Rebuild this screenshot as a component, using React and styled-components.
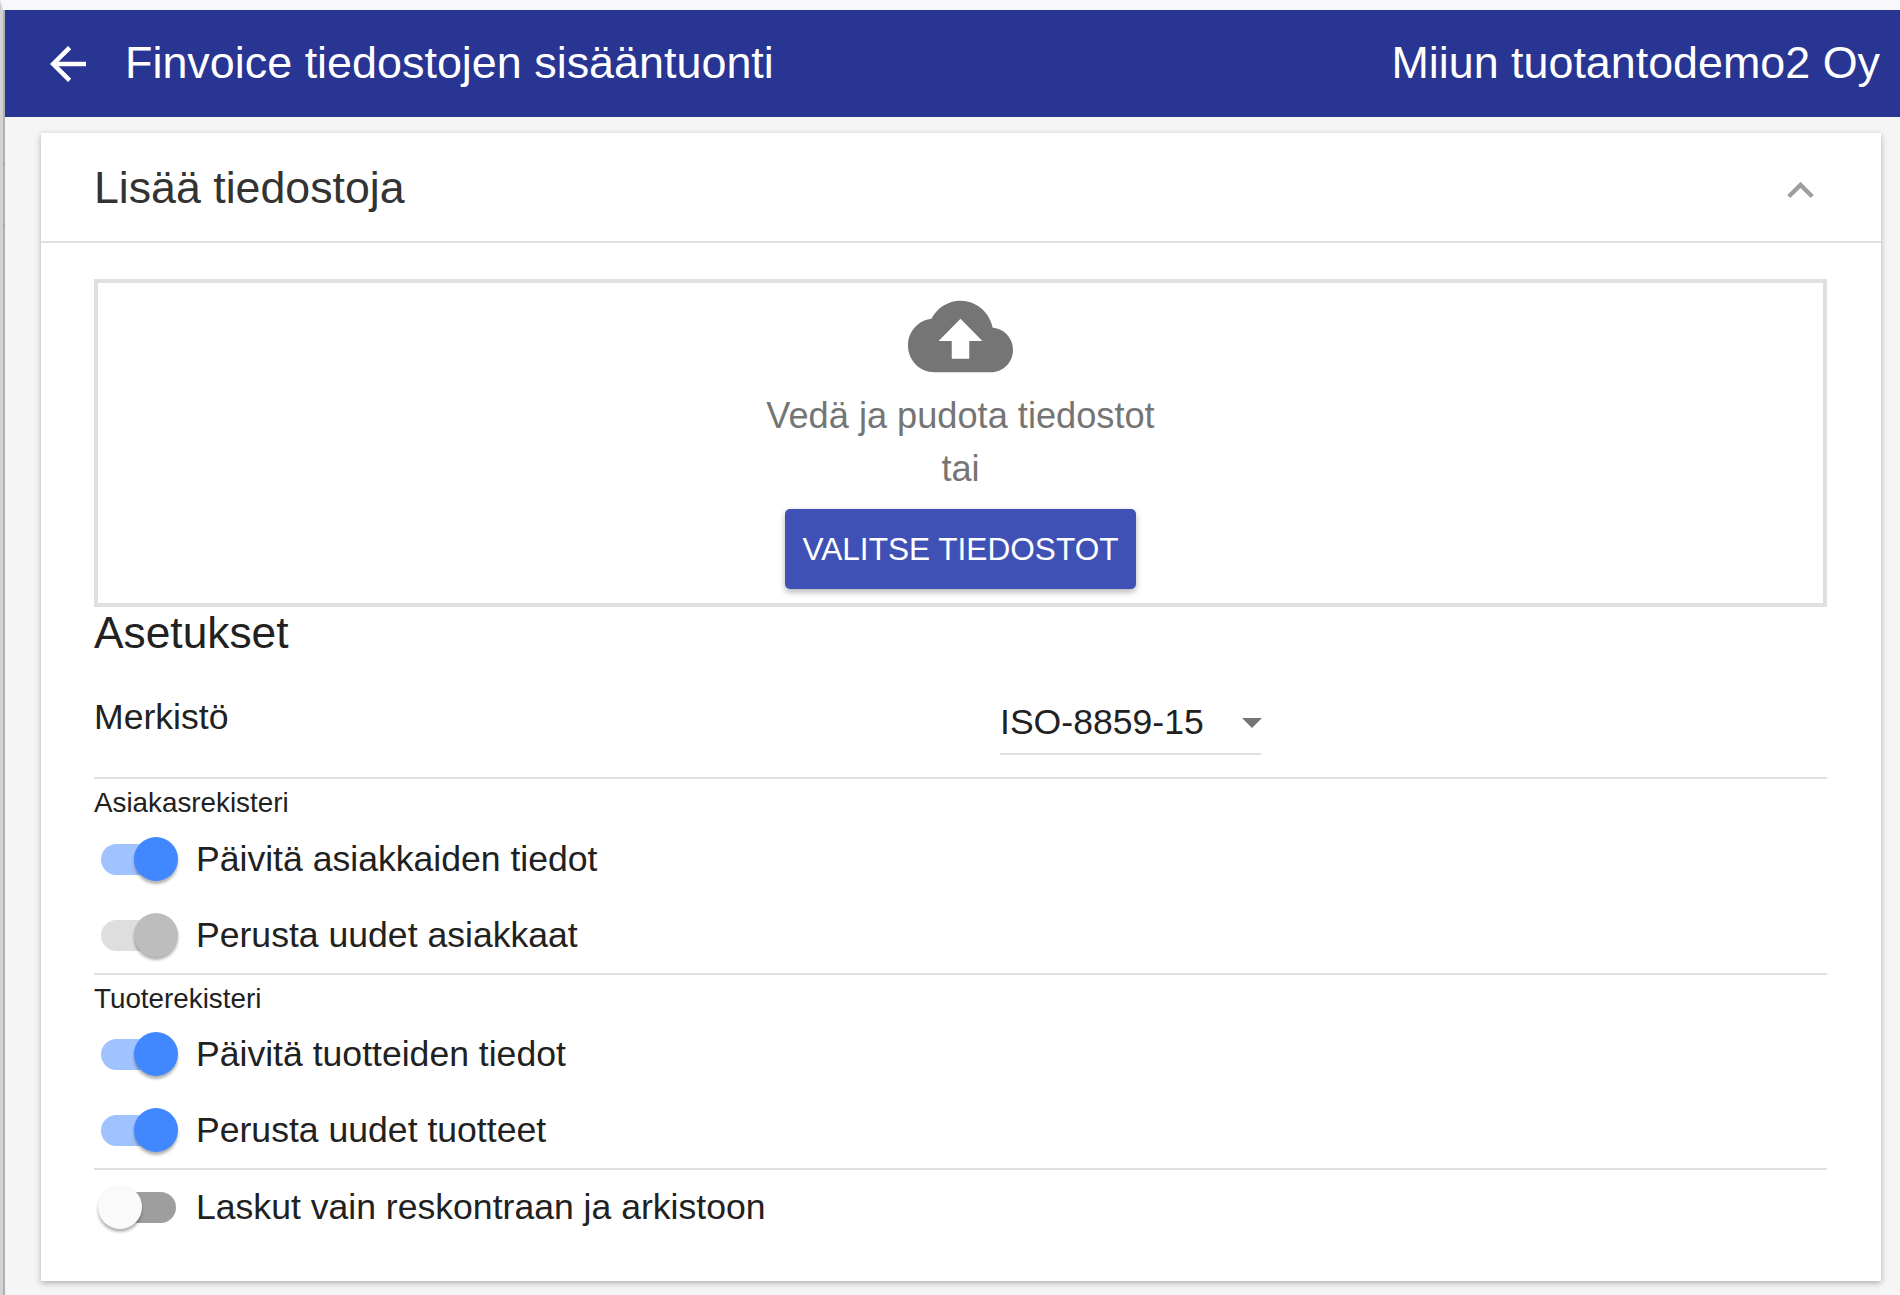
import React from "react";
import styled, { createGlobalStyle } from "styled-components";

const Global = createGlobalStyle`
  html, body { margin: 0; padding: 0; background: #f5f5f5; }
  * { box-sizing: border-box; }
`;

const Page = styled.div`
  position: relative;
  width: 1900px;
  height: 1295px;
  overflow: hidden;
  padding: 0 0 0 2px;
  background: #f5f5f5;
  border-top: 10px solid #f8f8fa;
  border-left: 3px solid #d2d2d4;
  font-family: "Liberation Sans", Arial, sans-serif;
  color: #212121;
  &::before {
    content: "";
    position: absolute;
    left: 0;
    top: 0;
    bottom: 0;
    width: 2px;
    background: #b0b0b4;
  }
`;

const EdgeTick = styled.span`
  position: absolute;
  left: -3px;
  top: ${(p) => p.$y}px;
  width: 5px;
  height: 2px;
  background: #a6a6a6;
`;

const Header = styled.header`
  height: 107px;
  background: #293592;
  color: #fff;
  display: flex;
  align-items: center;
  padding: 0 20px 0 36px;
`;

const HeaderTitle = styled.div`
  font-size: 44.9px;
  line-height: 1;
  margin-left: 30px;
  flex: 1;
`;

const Company = styled.div`
  font-size: 44.85px;
  line-height: 1;
`;

const Card = styled.section`
  margin: 16px 19px 0 36px;
  height: 1148px;
  background: #fff;
  box-shadow: 0 2px 6px rgba(0, 0, 0, 0.3);
`;

const CardHead = styled.div`
  height: 110px;
  padding: 0 54px 0 53px;
  border-bottom: 2px solid #e0e0e0;
  display: flex;
  align-items: center;
  justify-content: space-between;
`;

const CardTitle = styled.h2`
  margin: 2px 0 0;
  font-size: 44.7px;
  font-weight: 400;
  color: #333;
`;

const CardBody = styled.div`
  padding: 36px 54px 0 53px;
`;

const DropZone = styled.div`
  height: 328px;
  border: 4px solid #e0e0e0;
  display: flex;
  flex-direction: column;
  align-items: center;
  color: #757575;
`;

const CloudIcon = styled.svg`
  width: 105px;
  height: 107px;
  margin-bottom: -1px;
  fill: #757575;
  flex: none;
`;

const DropText = styled.div`
  font-size: 36.2px;
  line-height: 53px;
  text-align: center;
`;

const PickButton = styled.button`
  margin-top: 14px;
  width: 351px;
  height: 80px;
  background: #3f51b5;
  color: #fff;
  border: 0;
  border-radius: 5px;
  font: 400 31.6px "Liberation Sans", Arial, sans-serif;
  box-shadow: 0 3px 6px rgba(0, 0, 0, 0.3);
`;

const SettingsTitle = styled.h3`
  margin: 0;
  font-size: 44.3px;
  font-weight: 400;
  line-height: 52px;
  color: #212121;
`;

const CharsetRow = styled.div`
  height: 120px;
  border-bottom: 2px solid #e0e0e0;
  display: grid;
  grid-template-columns: 906px 261px;
`;

const CharsetLabel = styled.div`
  font-size: 35.6px;
  line-height: 40px;
  padding-top: 38px;
`;

const Select = styled.div`
  height: 67px;
  margin-top: 29px;
  border-bottom: 2px solid #e0e0e0;
  position: relative;
  font-size: 35.6px;
  line-height: 42px;
  padding-top: 13px;
`;

const Caret = styled.span`
  position: absolute;
  right: -1px;
  top: 30px;
  width: 0;
  height: 0;
  border-left: 10px solid transparent;
  border-right: 10px solid transparent;
  border-top: 10px solid #757575;
`;

const GroupLabel = styled.div`
  height: ${(p) => p.$h}px;
  font-size: 27.8px;
  line-height: 30px;
  padding-top: 9px;
`;

const Divider = styled.hr`
  margin: 0;
  border: 0;
  height: 2px;
  background: #e0e0e0;
`;

const Row = styled.div`
  display: flex;
  align-items: center;
  height: ${(p) => p.$h || 76}px;
  font-size: 35.6px;
`;

const Track = styled.span`
  position: relative;
  margin-left: 7px;
  width: 75px;
  height: 31px;
  border-radius: 16px;
  background: ${(p) => p.$bg};
  flex: none;
`;

const Thumb = styled.span`
  position: absolute;
  top: -7px;
  width: 44px;
  height: 44px;
  border-radius: 50%;
  background: ${(p) => p.$bg};
  ${(p) => (p.$on ? "right: -2px;" : "left: -3px;")}
  box-shadow: 0 3px 3px rgba(0, 0, 0, 0.3);
`;

const RowLabel = styled.span`
  margin-left: 20px;
`;

const Chevron = styled.svg`
  width: 53px;
  height: 53px;
  fill: #9e9e9e;
  margin-top: 6px;
`;

const BackIcon = styled.svg`
  width: 54px;
  height: 54px;
  fill: #fff;
  flex: none;
`;

const Switch = ({ tone, label, h }) => {
  const tones = {
    on: { track: "#a0c2ff", thumb: "#4187ff", on: true },
    dis: { track: "#dedede", thumb: "#bdbdbd", on: true },
    off: { track: "#9e9e9e", thumb: "#fafafa", on: false },
  };
  const t = tones[tone];
  return (
    <Row $h={h}>
      <Track $bg={t.track}>
        <Thumb $bg={t.thumb} $on={t.on} />
      </Track>
      <RowLabel>{label}</RowLabel>
    </Row>
  );
};

export default function App() {
  return (
    <Page>
      <Global />
      <EdgeTick $y={153} />
      <EdgeTick $y={214} />
      <Header>
        <BackIcon viewBox="0 0 24 24">
          <path d="M20 11H7.83l5.59-5.59L12 4l-8 8 8 8 1.41-1.41L7.83 13H20v-2z" />
        </BackIcon>
        <HeaderTitle>Finvoice tiedostojen sisääntuonti</HeaderTitle>
        <Company>Miiun tuotantodemo2 Oy</Company>
      </Header>
      <Card>
        <CardHead>
          <CardTitle>Lisää tiedostoja</CardTitle>
          <Chevron viewBox="0 0 24 24">
            <path d="M12 8l-6 6 1.41 1.41L12 10.83l4.59 4.58L18 14z" />
          </Chevron>
        </CardHead>
        <CardBody>
          <DropZone>
            <CloudIcon viewBox="0 0 24 24" preserveAspectRatio="none">
              <path d="M19.35 10.04C18.67 6.59 15.64 4 12 4 9.11 4 6.6 5.64 5.35 8.04 2.34 8.36 0 10.91 0 14c0 3.31 2.69 6 6 6h13c2.76 0 5-2.24 5-5 0-2.64-2.05-4.78-4.65-4.96zM14 13v4h-4v-4H7l5-5 5 5h-3z" />
            </CloudIcon>
            <DropText>Vedä ja pudota tiedostot</DropText>
            <DropText>tai</DropText>
            <PickButton>VALITSE TIEDOSTOT</PickButton>
          </DropZone>
          <SettingsTitle>Asetukset</SettingsTitle>
          <CharsetRow>
            <CharsetLabel>Merkistö</CharsetLabel>
            <Select>
              ISO-8859-15
              <Caret />
            </Select>
          </CharsetRow>
          <GroupLabel $h={42}>Asiakasrekisteri</GroupLabel>
          <Switch tone="on" label="Päivitä asiakkaiden tiedot" />
          <Switch tone="dis" label="Perusta uudet asiakkaat" />
          <Divider />
          <GroupLabel $h={41}>Tuoterekisteri</GroupLabel>
          <Switch tone="on" label="Päivitä tuotteiden tiedot" />
          <Switch tone="on" label="Perusta uudet tuotteet" />
          <Divider />
          <Switch tone="off" h={74} label="Laskut vain reskontraan ja arkistoon" />
        </CardBody>
      </Card>
    </Page>
  );
}
